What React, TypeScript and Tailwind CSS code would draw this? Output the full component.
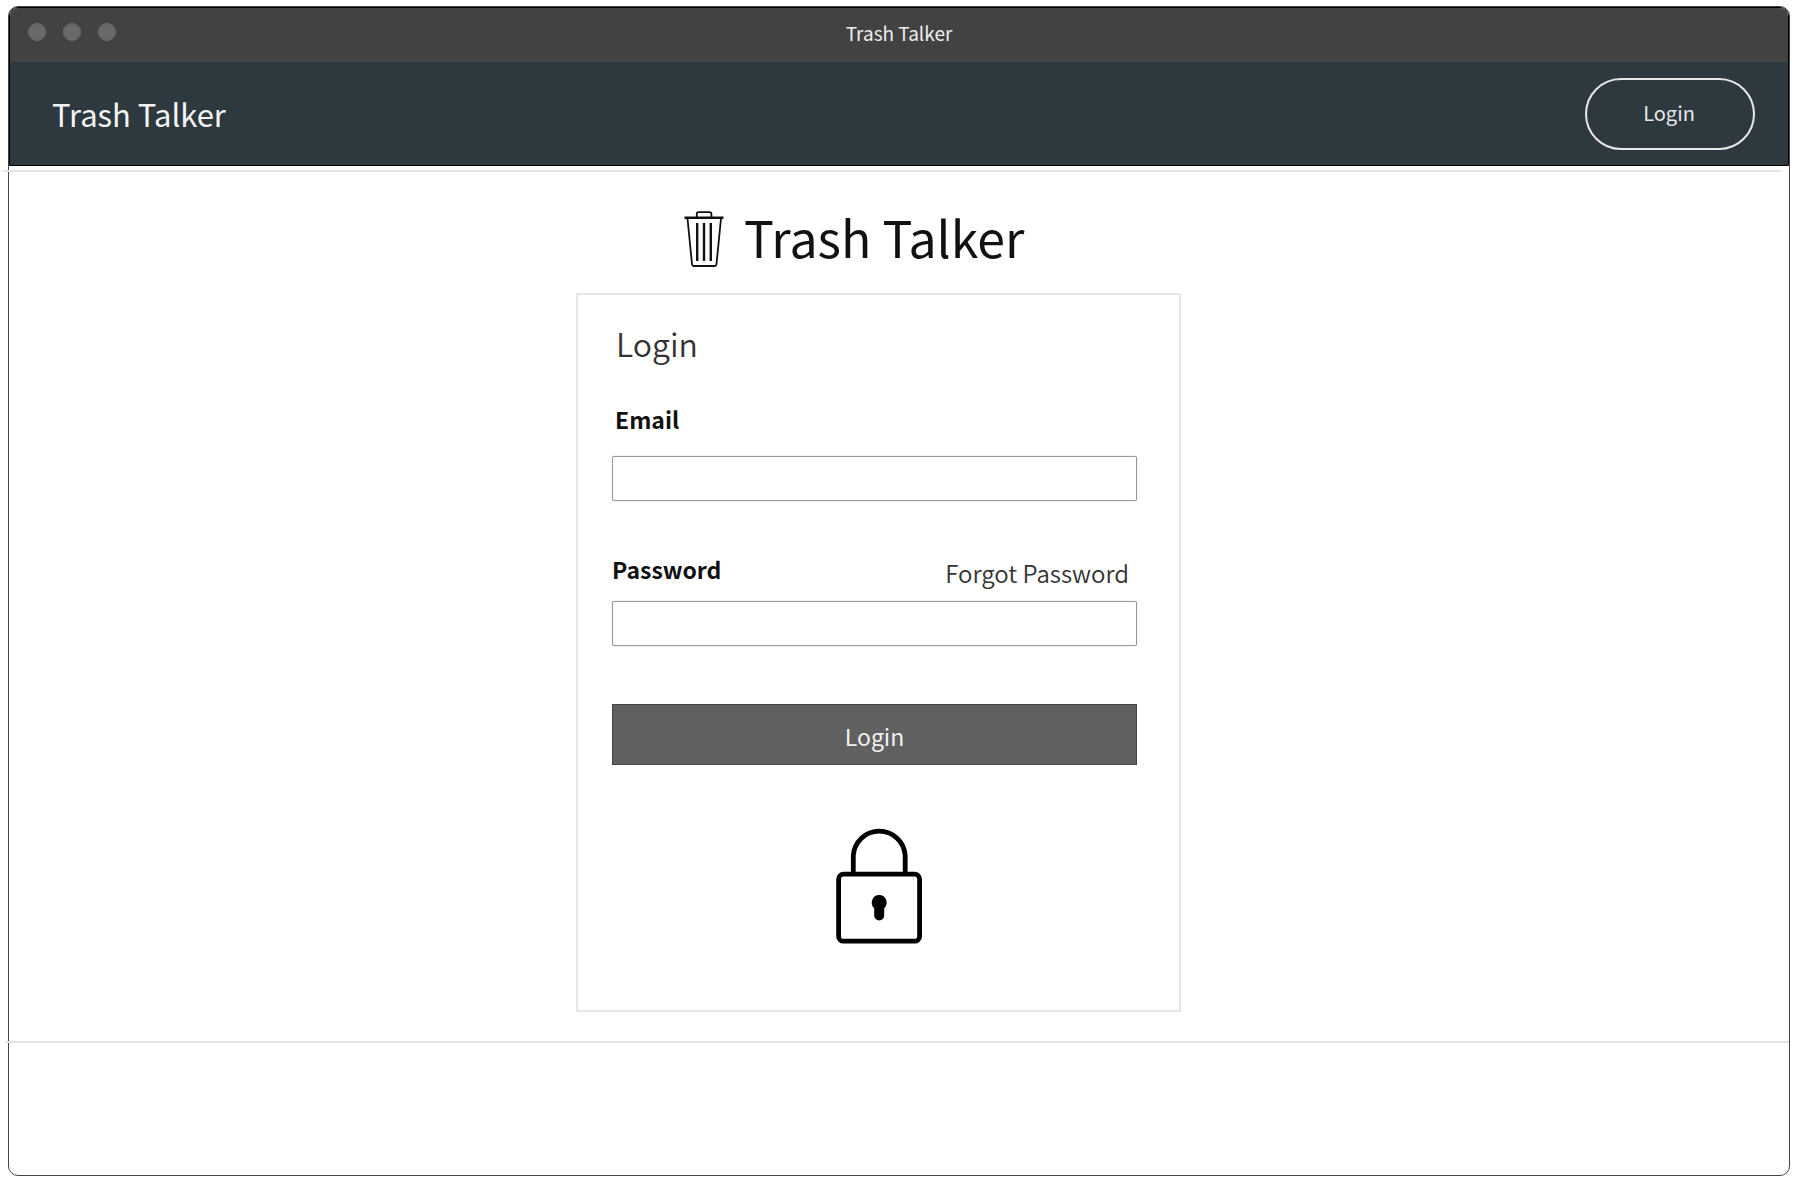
import React from "react";

function TrashIcon() {
  return (
    <svg aria-hidden="true" className="mt-1.5 h-14 w-10 shrink-0" viewBox="0 0 40 56" fill="none" stroke="#111" strokeWidth="1.8">
      <path d="M0.5 6.8H39.5" strokeWidth="2.4" />
      <path d="M3.5 7.5L8 53Q8.2 55 10 55H30.5Q32.300 55 32.5 53L37 7.5" />
      <path d="M12.8 6.5V3Q12.8 1.2 14.6 1.2H25.6Q27.4 1.2 27.4 3V6.5" />
      <path d="M13.2 12V50M20 12V50M26.8 12V50" strokeWidth="2.4" />
    </svg>
  );
}

function LockIcon() {
  return (
    <svg aria-hidden="true" className="h-[116px] w-[86px] shrink-0" viewBox="0 0 86 116" fill="none" stroke="#000" strokeWidth="4.8">
      <path d="M17.3 46V27.500A26 26 0 0 1 69.2 27.500V46" />
      <rect x="2.6" y="46.2" width="81" height="67" rx="5" />
      <path d="M43.2 67a7.6 7.6 0 0 0-5 13.2V87.5a5 5 0 0 0 10 0V80.2A7.6 7.6 0 0 0 43.2 67Z" fill="#000" stroke="none" />
    </svg>
  );
}

const fieldClass =
  "block h-[45px] w-full rounded-[2px] border border-[#999] bg-white px-3 text-xl outline-none shadow-[0_0_1px_#999]";

export default function App() {
  return (
    <div className="min-h-screen bg-white pt-1.5 pr-1.5 pb-2 pl-2 font-['Noto_Sans_CJK_SC',sans-serif] text-[#111]">
      <div className="flex min-h-[calc(100vh-14px)] flex-col rounded-[10px] border border-[#444]">
        <div className="rounded-t-[9px] border border-black">
          <div className="grid h-[54px] grid-cols-[1fr_auto_1fr] items-center rounded-t-[8px] bg-[#424242] px-[18px]">
            <div className="flex gap-[17px] pb-1.5">
              <span className="size-[18px] rounded-full bg-[#696969]" />
              <span className="size-[18px] rounded-full bg-[#696969]" />
              <span className="size-[18px] rounded-full bg-[#696969]" />
            </div>
            <div className="pb-1 text-[19px] leading-6 text-[#eee]">Trash Talker</div>
          </div>
          <header className="flex h-[103px] items-center justify-between bg-[#2d383f] pr-[33px] pl-[42px]">
            <div className="text-[31px] leading-10 text-[#f5f5f5]">Trash Talker</div>
            <button type="button" className="h-[72px] w-[170px] rounded-full border-2 border-[#e8e8e8] pr-0.5 pb-0.5 text-xl text-[#e8e8e8]">
              Login
            </button>
          </header>
        </div>

        <hr className="mt-1 mr-2 -ml-1.5 border-t-2 border-[#e4e4e4]" />
        <main className="flex justify-center pt-[33px] pr-[41px] pb-[29px]">
          <div className="w-[605px]">
            <div className="flex items-center gap-5 pl-[108px]">
              <TrashIcon />
              <h1 className="text-[50px] leading-[62px] whitespace-nowrap text-[#111]">Trash Talker</h1>
            </div>
            <form className="mt-[26px] border-2 border-[#e6e6e6] pt-7 pr-[42px] pb-[66px] pl-[34px]" onSubmit={(e) => e.preventDefault()}>
              <h2 className="pl-1 text-[32px] leading-10 font-[350] text-[#333]">Login</h2>
              <label htmlFor="email" className="mt-10 block pl-[3px] text-[23px] leading-8 font-bold">Email</label>
              <input id="email" type="email" className={fieldClass + " mt-[21px]"} />
              <div className="mt-[52px] flex items-start justify-between">
                <label htmlFor="password" className="text-[23px] leading-8 font-bold">Password</label>
                <a href="#forgot" className="pt-1 pr-2 text-[24px] leading-8 font-[350] text-[#333]">Forgot Password</a>
              </div>
              <input id="password" type="password" className={fieldClass + " mt-3"} />
              <button type="submit" className="mt-[58px] block h-[61px] w-full border border-[#444] bg-[#606060] pt-1 text-[23px] text-[#f0f0f0]">
                Login
              </button>
              <div className="mt-[63px] flex justify-center pl-2">
                <LockIcon />
              </div>
            </form>
          </div>
        </main>
        <footer className="-ml-1 border-t-2 border-[#e2e2e2]" />
      </div>
    </div>
  );
}
